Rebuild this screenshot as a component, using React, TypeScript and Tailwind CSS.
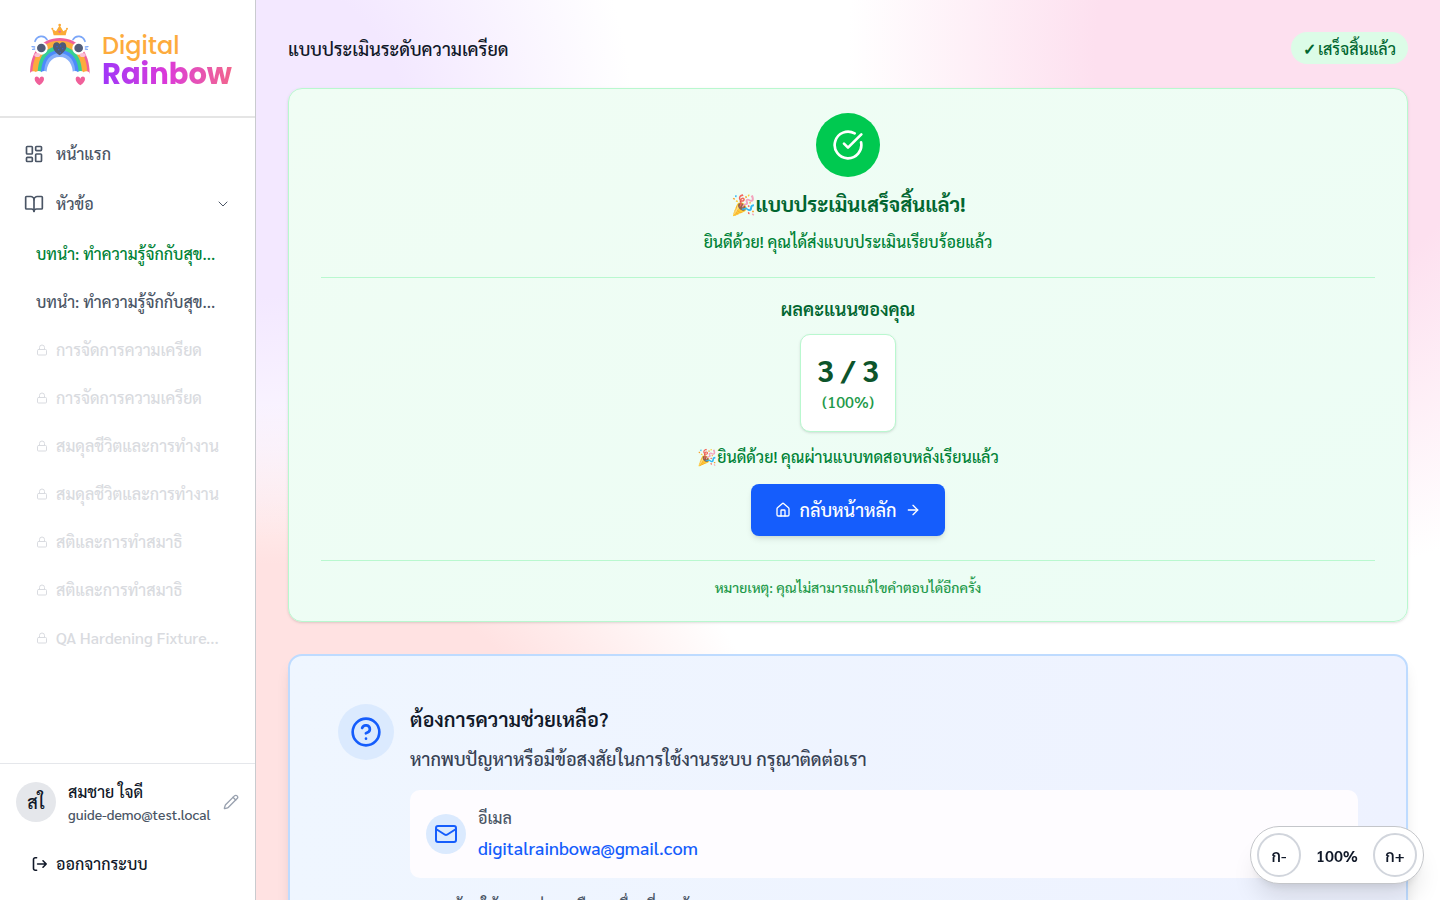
import type { ReactNode } from "react";
import {
  ArrowRight,
  BookOpen,
  ChevronDown,
  CircleCheckBig,
  CircleQuestionMark,
  House,
  LayoutDashboard,
  Lock,
  Mail,
  Pencil,
} from "lucide-react";

type Topic = { id: number; title: string; state: "done" | "open" | "locked" };

const topics: Topic[] = [
  { id: 1, title: "บทนำ: ทำความรู้จักกับสุข...", state: "done" },
  { id: 2, title: "บทนำ: ทำความรู้จักกับสุข...", state: "open" },
  { id: 3, title: "การจัดการความเครียด", state: "locked" },
  { id: 4, title: "การจัดการความเครียด", state: "locked" },
  { id: 5, title: "สมดุลชีวิตและการทำงาน", state: "locked" },
  { id: 6, title: "สมดุลชีวิตและการทำงาน", state: "locked" },
  { id: 7, title: "สติและการทำสมาธิ", state: "locked" },
  { id: 8, title: "สติและการทำสมาธิ", state: "locked" },
  { id: 9, title: "QA Hardening Fixture...", state: "locked" },
];

function RainbowMark() {
  return (
    <svg viewBox="0 0 240 228" className="h-[76px] w-20 shrink-0" aria-hidden="true">
      <path d="M30 174C30 108 64 66 119 66s90 42 90 108z" fill="#f0609a" />
      <path d="M37 174C37 114 68 74 119 74s83 40 83 100z" fill="#fdab3d" />
      <path d="M53 174C53 122 78 91 119 91s67 31 67 83z" fill="#36cf92" />
      <path d="M63 174C63 129 85 102 119 102s57 27 57 72z" fill="#4c8bfb" />
      <path d="M72 174c0-38 17-62 47-62s47 24 47 62z" fill="#86aef9" />
      <path d="M79 178c0-33 14-55 40-55s40 22 40 55z" fill="#fff" />
      <g fill="#fff">
        <circle cx="40" cy="177" r="11" />
        <circle cx="56" cy="176" r="11" />
        <circle cx="73" cy="176" r="11" />
        <circle cx="165" cy="176" r="11" />
        <circle cx="182" cy="176" r="11" />
        <circle cx="199" cy="177" r="11" />
        <circle cx="64" cy="97" r="19" />
        <circle cx="176" cy="97" r="19" />
      </g>
      <ellipse cx="52" cy="117" rx="9" ry="6" fill="#fbc0d6" />
      <ellipse cx="188" cy="117" rx="9" ry="6" fill="#fbc0d6" />
      <circle cx="64" cy="96" r="13" fill="#535d78" />
      <circle cx="176" cy="96" r="13" fill="#535d78" />
      <g fill="none" stroke="#7ba6f8" strokeWidth="5" strokeLinecap="round">
        <path d="M45 76c6-18 28-20 36-5" />
        <path d="M195 76c-6-18-28-20-36-5" />
        <path d="M36 92l8 1M38 100l6-1M204 92l-8 1M202 100l-6-1" strokeWidth="4" />
      </g>
      <path d="M119 118c-14-9-20-17-20-27 0-13 14-17 20-7 6-10 20-6 20 7 0 10-6 18-20 27z" fill="#4f5a76" />
      <g fill="#2f62e8">
        <circle cx="111" cy="92" r="2" />
        <circle cx="122" cy="90" r="2" />
        <circle cx="128" cy="98" r="2" />
        <circle cx="116" cy="101" r="2" />
        <circle cx="121" cy="109" r="2" />
      </g>
      <path d="M101 58l-5-20 12 8 11-18 11 18 12-8-5 20z" fill="#fbaa36" />
      <circle cx="119" cy="27" r="4" fill="#fbaa36" />
      <circle cx="97" cy="38" r="3" fill="#fbaa36" />
      <circle cx="141" cy="38" r="3" fill="#fbaa36" />
      <path d="M119 51l-4-4c-1-3 3-4 4-1 1-3 5-2 4 1z" fill="#f0609a" />
      <path d="M58 208c-10-7-14-13-14-19 0-9 11-10 14-1 3-9 14-8 14 1 0 6-4 12-14 19z" fill="#f0609a" />
      <path d="M181 208c-10-7-14-13-14-19 0-9 11-10 14-1 3-9 14-8 14 1 0 6-4 12-14 19z" fill="#f0609a" />
    </svg>
  );
}

function SignOutIcon() {
  return (
    <svg
      viewBox="0 0 16 16"
      className="size-4 shrink-0"
      fill="none"
      stroke="currentColor"
      strokeWidth="1.6"
      strokeLinecap="round"
      strokeLinejoin="round"
      aria-hidden="true"
    >
      <path d="M4.6 1.8H3.2a1.7 1.7 0 0 0-1.7 1.7v9a1.7 1.7 0 0 0 1.7 1.7h1.4" />
      <path d="M5.6 8h8.6M11 4.8 14.2 8 11 11.2" />
    </svg>
  );
}

function TopicLink({ topic }: { topic: Topic }) {
  const base = "flex h-12 items-center gap-2 pl-9 text-base font-medium whitespace-nowrap";
  if (topic.state === "locked") {
    return (
      <button type="button" disabled className={`${base} w-full text-[#d9dbe0]`}>
        <Lock className="size-3 shrink-0" />
        {topic.title}
      </button>
    );
  }
  return (
    <a href="#topic" className={`${base} ${topic.state === "done" ? "text-[#008236]" : "text-[#4a5565]"}`}>
      {topic.title}
    </a>
  );
}

function Sidebar() {
  return (
    <aside className="flex h-full w-64 shrink-0 flex-col border-r border-[#c9cbcf] bg-white">
      <div className="flex gap-0.5 border-b-2 border-[#e5e5e5] pt-4 pb-6 pl-5">
        <RainbowMark />
        <div className="flex flex-col pt-4 font-['Poppins','Noto_Sans',sans-serif]">
          <span className="text-2xl leading-7 font-medium text-[#fdab3d]">Digital</span>
          <span className="bg-linear-to-r from-[#a035f8] via-[#dc38d8] to-[#f2648c] bg-clip-text text-[29px] leading-7 font-bold text-transparent">
            Rainbow
          </span>
        </div>
      </div>

      <nav className="flex-1 overflow-hidden pt-3 text-base font-medium text-[#4a5565]">
        <div className="flex flex-col gap-0.5">
          <a href="#home" className="flex h-12 items-center gap-3 px-6">
            <LayoutDashboard className="size-5" />
            หน้าแรก
          </a>
          <button type="button" className="flex h-12 items-center gap-3 px-6">
            <BookOpen className="size-5" />
            <span className="flex-1 text-left">หัวข้อ</span>
            <ChevronDown className="size-4" strokeWidth={1.5} />
          </button>
          <ul>
            {topics.map((t) => (
              <li key={t.id}>
                <TopicLink topic={t} />
              </li>
            ))}
          </ul>
        </div>
      </nav>

      <div className="border-t border-[#e5e7eb] p-4 text-[#101828]">
        <div className="flex items-center gap-3">
          <div className="flex size-10 shrink-0 items-center justify-center rounded-full bg-[#e5e7eb] text-lg font-medium">
            สใ
          </div>
          <div className="min-w-0 flex-1">
            <p className="text-base leading-6 font-medium">สมชาย ใจดี</p>
            <p className="text-sm leading-5 font-medium text-[#4a5565]">guide-demo@test.local</p>
          </div>
          <button type="button" aria-label="แก้ไขโปรไฟล์" className="text-[#99a1af]">
            <Pencil className="size-4" />
          </button>
        </div>
        <button type="button" className="mt-5 flex h-10 w-full items-center gap-2 px-4 text-base font-medium">
          <SignOutIcon />
          ออกจากระบบ
        </button>
      </div>
    </aside>
  );
}

function Divider() {
  return <hr className="w-full border-t border-[#b9f8cf]" />;
}

function ResultCard() {
  return (
    <section className="flex flex-col items-center rounded-[14px] border border-[#b9f8cf] bg-linear-to-br from-[#f0fdf4] to-[#ecfdf5] px-8 py-6 text-center shadow-sm">
      <div className="flex size-16 items-center justify-center rounded-full bg-[#00c950] text-white">
        <CircleCheckBig className="size-8" />
      </div>
      <h2 className="mt-3 text-xl leading-[30px] font-bold text-[#016630]">
        <span className="opacity-80">🎉</span>แบบประเมินเสร็จสิ้นแล้ว!
      </h2>
      <p className="mt-2.5 mb-[22px] text-base leading-[26px] font-medium text-[#008236]">
        ยินดีด้วย! คุณได้ส่งแบบประเมินเรียบร้อยแล้ว
      </p>
      <Divider />
      <h3 className="mt-4 text-lg leading-[30px] font-semibold text-[#016630]">ผลคะแนนของคุณ</h3>
      <div className="mt-2.5 rounded-[10px] border border-[#b9f8cf] bg-white p-4 shadow-sm">
        <p className="text-3xl leading-[38px] font-bold text-[#0d542b]">3 / 3</p>
        <p className="text-base leading-[26px] font-medium text-[#1f9a4b]">(100%)</p>
      </div>
      <p className="mt-3 text-base leading-[26px] font-medium text-[#008236]">
        <span className="opacity-80">🎉</span>ยินดีด้วย! คุณผ่านแบบทดสอบหลังเรียนแล้ว
      </p>
      <a
        href="#home"
        className="mt-3.5 mb-6 flex h-[52px] items-center gap-2 rounded-lg bg-[#155dfc] px-6 text-lg font-medium text-white shadow-md"
      >
        <House className="size-4" />
        กลับหน้าหลัก
        <ArrowRight className="size-4" />
      </a>
      <Divider />
      <p className="mt-4 text-sm leading-5 font-medium text-[#1f9a4b]">
        หมายเหตุ: คุณไม่สามารถแก้ไขคำตอบได้อีกครั้ง
      </p>
    </section>
  );
}

function RoundIcon({ className, children }: { className: string; children: ReactNode }) {
  return (
    <div className={`flex shrink-0 items-center justify-center rounded-full bg-[#dbeafe] text-[#155dfc] ${className}`}>
      {children}
    </div>
  );
}

function HelpCard() {
  return (
    <section className="flex gap-4 rounded-[14px] border-2 border-[#bedbff] bg-linear-to-r from-[#eff6ff] to-[#eef2ff] p-12 shadow-lg">
      <RoundIcon className="size-14">
        <CircleQuestionMark className="size-8" />
      </RoundIcon>
      <div className="min-w-0 flex-1">
        <h2 className="text-xl leading-[30px] font-semibold text-[#101828]">ต้องการความช่วยเหลือ?</h2>
        <p className="mt-2.5 text-lg leading-[30px] font-medium text-[#364153]">
          หากพบปัญหาหรือมีข้อสงสัยในการใช้งานระบบ กรุณาติดต่อเรา
        </p>
        <div className="mt-4 flex items-center gap-3 rounded-[10px] bg-[#fefcff] p-4">
          <RoundIcon className="size-10">
            <Mail className="size-6" />
          </RoundIcon>
          <div>
            <p className="text-base leading-6 font-medium text-[#4a5565]">อีเมล</p>
            <a href="mailto:digitalrainbowa@gmail.com" className="mt-1 block text-lg leading-7 font-medium text-[#155dfc]">
              digitalrainbowa@gmail.com
            </a>
          </div>
        </div>
        <p className="mt-4 pl-3 text-base leading-6 font-medium text-[#4a5565]">
          เราพร้อมให้ความช่วยเหลือทุกเรื่องที่คุณต้องการ
        </p>
      </div>
    </section>
  );
}

function FontSizer() {
  const round =
    "flex size-11 items-center justify-center rounded-full border-2 border-[#d1d5dc] bg-white pt-0.5 text-base font-semibold";
  return (
    <div className="fixed right-4 bottom-4 flex items-center gap-2 rounded-full border border-[#c4c6ca] bg-white p-1.5 text-[#101828] shadow-xl">
      <button type="button" className={round}>
        ก-
      </button>
      <span className="w-14 pt-0.5 text-center text-base font-semibold">100%</span>
      <button type="button" className={round}>
        ก+
      </button>
    </div>
  );
}

export default function App() {
  return (
    <div className="flex h-screen overflow-hidden font-['Sarabun','Noto_Sans',sans-serif]">
      <Sidebar />
      <main className="flex min-w-0 flex-1 flex-col overflow-x-hidden overflow-y-auto bg-white bg-[radial-gradient(ellipse_32%_45%_at_0%_15%,#f3e8ff_40%,transparent_100%),radial-gradient(ellipse_44%_44%_at_0%_89%,#ffe2e2_60%,transparent_100%),radial-gradient(ellipse_38%_58%_at_88%_6%,#fde0ef_45%,transparent_100%)] p-8 [scrollbar-width:none]">
        <header className="mb-6 flex h-8 shrink-0 items-center justify-between">
          <h1 className="pt-0.5 text-lg font-medium text-[#101828]">แบบประเมินระดับความเครียด</h1>
          <span className="flex h-8 items-center gap-0.5 rounded-full bg-[#dcfce7] px-3 pt-0.5 text-base font-medium text-[#016630]">
            <span className="font-bold">✓</span>
            <span>เสร็จสิ้นแล้ว</span>
          </span>
        </header>
        <div className="flex flex-col gap-8">
          <ResultCard />
          <HelpCard />
        </div>
      </main>
      <FontSizer />
    </div>
  );
}
